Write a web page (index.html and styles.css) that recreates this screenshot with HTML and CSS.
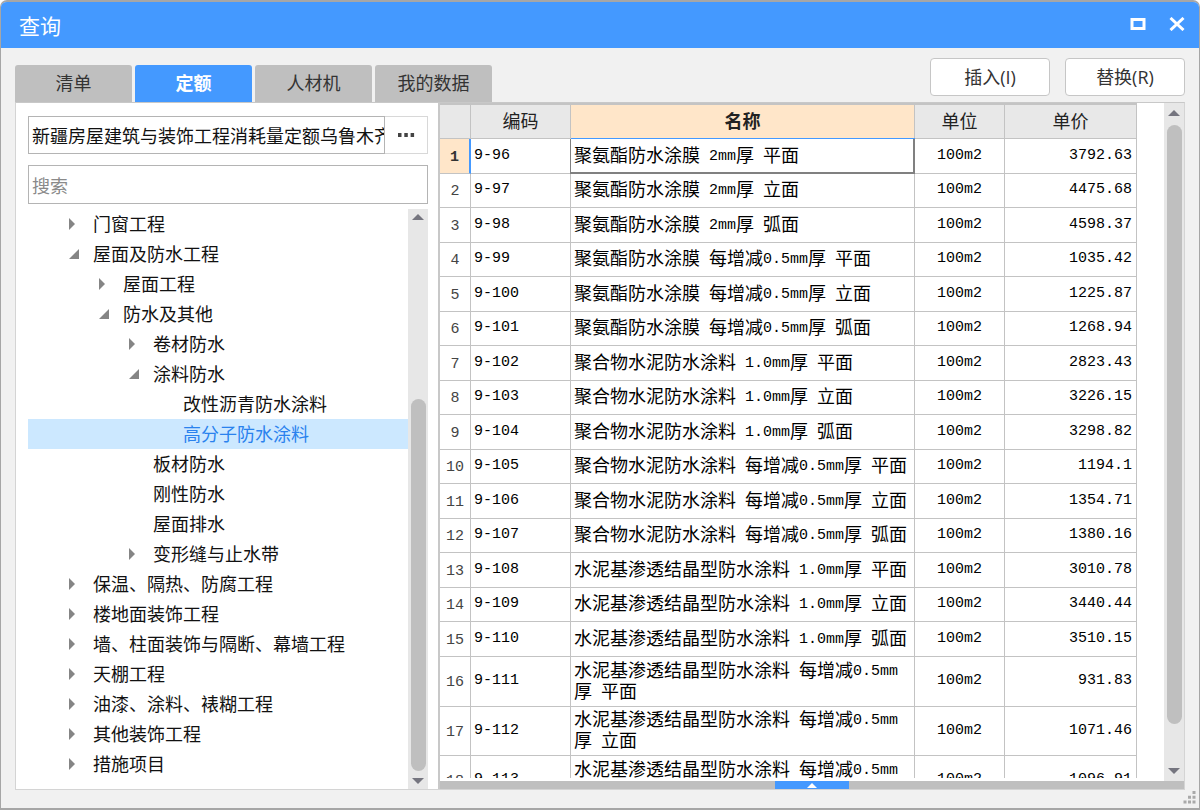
FILE: index.html
```html
<!DOCTYPE html>
<html lang="zh-CN">
<head>
<meta charset="utf-8">
<title>查询</title>
<link rel="stylesheet" href="styles.css">
</head>
<body>
<div class="window">
  <header class="titlebar">
    <h1 class="title">查询</h1>
    <button class="win-btn" aria-label="最大化"><svg width="16" height="14" viewBox="0 0 16 14"><path d="M2 2.500h12v9H2z" fill="none" stroke="#fff" stroke-width="3"/></svg></button>
    <button class="win-btn" aria-label="关闭"><svg width="16" height="14" viewBox="0 0 16 14"><path d="M1.500 1l13 12M14.500 1l-13 12" fill="none" stroke="#fff" stroke-width="3"/></svg></button>
  </header>

  <div class="toolbar">
    <nav class="tabs">
      <button class="tab">清单</button>
      <button class="tab active">定额</button>
      <button class="tab">人材机</button>
      <button class="tab">我的数据</button>
    </nav>
    <div class="actions">
      <button class="action">插入(I)</button>
      <button class="action">替换(R)</button>
    </div>
  </div>

  <main class="panel">
    <section class="side">
      <div class="picker">
        <input class="picker-input" type="text" aria-label="定额库" value="新疆房屋建筑与装饰工程消耗量定额乌鲁木齐">
        <button class="picker-btn" aria-label="选择定额库"><svg width="18" height="4" viewBox="0 0 18 4"><path d="M1 0h3.500v4H1zM7.300 0h3.500v4H7.300zM13.600 0h3.500v4h-3.500z" fill="#444"/></svg></button>
      </div>
      <input class="search" type="text" placeholder="搜索" aria-label="搜索">
      <div class="tree-wrap">
        <ul class="tree">
          <li class="node l1"><button class="toggle closed" aria-label="展开"></button>门窗工程</li>
          <li class="node l1"><button class="toggle open" aria-label="折叠"></button>屋面及防水工程</li>
          <li class="node l2"><button class="toggle closed" aria-label="展开"></button>屋面工程</li>
          <li class="node l2"><button class="toggle open" aria-label="折叠"></button>防水及其他</li>
          <li class="node l3"><button class="toggle closed" aria-label="展开"></button>卷材防水</li>
          <li class="node l3"><button class="toggle open" aria-label="折叠"></button>涂料防水</li>
          <li class="node l4 leaf">改性沥青防水涂料</li>
          <li class="node l4 leaf selected">高分子防水涂料</li>
          <li class="node l3 leaf">板材防水</li>
          <li class="node l3 leaf">刚性防水</li>
          <li class="node l3 leaf">屋面排水</li>
          <li class="node l3"><button class="toggle closed" aria-label="展开"></button>变形缝与止水带</li>
          <li class="node l1"><button class="toggle closed" aria-label="展开"></button>保温、隔热、防腐工程</li>
          <li class="node l1"><button class="toggle closed" aria-label="展开"></button>楼地面装饰工程</li>
          <li class="node l1"><button class="toggle closed" aria-label="展开"></button>墙、柱面装饰与隔断、幕墙工程</li>
          <li class="node l1"><button class="toggle closed" aria-label="展开"></button>天棚工程</li>
          <li class="node l1"><button class="toggle closed" aria-label="展开"></button>油漆、涂料、裱糊工程</li>
          <li class="node l1"><button class="toggle closed" aria-label="展开"></button>其他装饰工程</li>
          <li class="node l1"><button class="toggle closed" aria-label="展开"></button>措施项目</li>
        </ul>
        <div class="scrollbar">
          <span class="arrow up"></span>
          <div class="track tree-track"><div class="thumb"></div></div>
          <span class="arrow down"></span>
        </div>
      </div>
    </section>

    <section class="content">
      <div class="grid-wrap">
        <div class="grid-view">
          <table class="grid">
            <colgroup><col class="c-idx"><col class="c-code"><col><col class="c-unit"><col class="c-price"></colgroup>
            <thead>
              <tr><th></th><th>编码</th><th class="current">名称</th><th>单位</th><th>单价</th></tr>
            </thead>
            <tbody>
              <tr class="current-row"><td>1</td><td>9-96</td><td>聚氨酯防水涂膜<span class="n"> 2mm</span>厚<span class="n"> </span>平面</td><td>100m2</td><td>3792.63</td></tr>
              <tr><td>2</td><td>9-97</td><td>聚氨酯防水涂膜<span class="n"> 2mm</span>厚<span class="n"> </span>立面</td><td>100m2</td><td>4475.68</td></tr>
              <tr><td>3</td><td>9-98</td><td>聚氨酯防水涂膜<span class="n"> 2mm</span>厚<span class="n"> </span>弧面</td><td>100m2</td><td>4598.37</td></tr>
              <tr><td>4</td><td>9-99</td><td>聚氨酯防水涂膜<span class="n"> </span>每增减<span class="n">0.5mm</span>厚<span class="n"> </span>平面</td><td>100m2</td><td>1035.42</td></tr>
              <tr><td>5</td><td>9-100</td><td>聚氨酯防水涂膜<span class="n"> </span>每增减<span class="n">0.5mm</span>厚<span class="n"> </span>立面</td><td>100m2</td><td>1225.87</td></tr>
              <tr><td>6</td><td>9-101</td><td>聚氨酯防水涂膜<span class="n"> </span>每增减<span class="n">0.5mm</span>厚<span class="n"> </span>弧面</td><td>100m2</td><td>1268.94</td></tr>
              <tr><td>7</td><td>9-102</td><td>聚合物水泥防水涂料<span class="n"> 1.0mm</span>厚<span class="n"> </span>平面</td><td>100m2</td><td>2823.43</td></tr>
              <tr><td>8</td><td>9-103</td><td>聚合物水泥防水涂料<span class="n"> 1.0mm</span>厚<span class="n"> </span>立面</td><td>100m2</td><td>3226.15</td></tr>
              <tr><td>9</td><td>9-104</td><td>聚合物水泥防水涂料<span class="n"> 1.0mm</span>厚<span class="n"> </span>弧面</td><td>100m2</td><td>3298.82</td></tr>
              <tr><td>10</td><td>9-105</td><td>聚合物水泥防水涂料<span class="n"> </span>每增减<span class="n">0.5mm</span>厚<span class="n"> </span>平面</td><td>100m2</td><td>1194.1</td></tr>
              <tr><td>11</td><td>9-106</td><td>聚合物水泥防水涂料<span class="n"> </span>每增减<span class="n">0.5mm</span>厚<span class="n"> </span>立面</td><td>100m2</td><td>1354.71</td></tr>
              <tr><td>12</td><td>9-107</td><td>聚合物水泥防水涂料<span class="n"> </span>每增减<span class="n">0.5mm</span>厚<span class="n"> </span>弧面</td><td>100m2</td><td>1380.16</td></tr>
              <tr><td>13</td><td>9-108</td><td>水泥基渗透结晶型防水涂料<span class="n"> 1.0mm</span>厚<span class="n"> </span>平面</td><td>100m2</td><td>3010.78</td></tr>
              <tr><td>14</td><td>9-109</td><td>水泥基渗透结晶型防水涂料<span class="n"> 1.0mm</span>厚<span class="n"> </span>立面</td><td>100m2</td><td>3440.44</td></tr>
              <tr><td>15</td><td>9-110</td><td>水泥基渗透结晶型防水涂料<span class="n"> 1.0mm</span>厚<span class="n"> </span>弧面</td><td>100m2</td><td>3510.15</td></tr>
              <tr class="tall"><td>16</td><td>9-111</td><td>水泥基渗透结晶型防水涂料<span class="n"> </span>每增减<span class="n">0.5mm</span>厚<span class="n"> </span>平面</td><td>100m2</td><td>931.83</td></tr>
              <tr class="tall"><td>17</td><td>9-112</td><td>水泥基渗透结晶型防水涂料<span class="n"> </span>每增减<span class="n">0.5mm</span>厚<span class="n"> </span>立面</td><td>100m2</td><td>1071.46</td></tr>
              <tr class="tall"><td>18</td><td>9-113</td><td>水泥基渗透结晶型防水涂料<span class="n"> </span>每增减<span class="n">0.5mm</span>厚<span class="n"> </span>弧面</td><td>100m2</td><td>1096.91</td></tr>
            </tbody>
          </table>
        </div>
        <div class="scrollbar grid-scrollbar">
          <span class="arrow up"></span>
          <div class="track grid-track"><div class="thumb"></div></div>
          <span class="arrow down"></span>
        </div>
      </div>
      <div class="splitter"><button class="splitter-btn" aria-label="展开下方面板"><svg width="10" height="5" viewBox="0 0 10 5"><path d="M5 0l5 5H0z" fill="#fff"/></svg></button></div>
    </section>
  </main>

  <footer class="statusbar">
    <svg width="13" height="13" viewBox="0 0 13 13"><path d="M9.500 0h3v3h-3zM5 4.700h3v3H5zM9.500 4.700h3v3h-3zM.5 9.500h3v3h-3zM5 9.500h3v3H5zM9.500 9.500h3v3h-3z" fill="#a9a9a9"/></svg>
  </footer>
</div>
</body>
</html>
```

FILE: styles.css
```css
* {
  box-sizing: border-box;
}

body {
  margin: 0;
  background: #fff;
  color: #111;
  font: 18px/30px "Noto Sans CJK SC", sans-serif;
}

button,
input {
  margin: 0;
  padding: 0;
  border: 0;
  background: none;
  color: inherit;
  font: inherit;
}

.window {
  display: flex;
  flex-direction: column;
  height: 100vh;
  overflow: hidden;
  border: 1px solid #a6a6a6;
  border-width: 2px 1px;
  border-radius: 7px 7px 0 0;
  background: #f1f1f1;
}

/* Title bar */
.titlebar {
  display: flex;
  flex: none;
  align-items: center;
  gap: 23px;
  height: 46px;
  padding: 0 14px 2px 18px;
  background: #4499ff;
  color: #fff;
}

.title {
  flex: 1;
  margin: 0;
  padding-top: 2px;
  font-size: 21px;
  font-weight: 400;
}

.win-btn {
  display: flex;
}

/* Tabs and actions */
.toolbar {
  display: flex;
  flex: none;
  justify-content: space-between;
  align-items: flex-end;
  height: 54px;
  padding: 0 14px;
}

.tabs {
  display: flex;
  gap: 3px;
}

.tab {
  width: 117px;
  height: 37px;
  padding-bottom: 3px;
  border-radius: 3px 3px 0 0;
  background: #bfbfbf;
  color: #333;
}

.tab.active {
  background: #4499ff;
  color: #fff;
  font-weight: 700;
}

.actions {
  display: flex;
  gap: 15px;
  padding-bottom: 6px;
}

.action {
  width: 120px;
  height: 38px;
  border: 1px solid #c6c6c6;
  border-radius: 4px;
  background: #fff;
  color: #333;
  font-family: "Open Sans", "Noto Sans CJK SC", sans-serif;
}

/* Main panel */
.panel {
  display: flex;
  flex: 1;
  min-height: 0;
  margin: 0 14px;
  border: 1px solid #d4d4d4;
  border-top-color: #c8c8c8;
  background: #fff;
}

.side {
  display: flex;
  flex: none;
  flex-direction: column;
  width: 422px;
  padding: 13px 10px 0 12px;
}

.picker {
  display: flex;
  flex: none;
  height: 38px;
}

.picker-input {
  flex: 1;
  min-width: 0;
  padding-left: 3px;
  border: 1px solid #b4b4b4;
}

.picker-btn {
  display: flex;
  align-items: center;
  justify-content: center;
  width: 43px;
  border: 1px solid #d8d8d8;
  border-left: 0;
}

.search {
  flex: none;
  height: 39px;
  margin-top: 11px;
  padding-left: 3px;
  border: 1px solid #b4b4b4;
}

.search::placeholder {
  color: #8a8a8a;
  opacity: 1;
}

/* Tree */
.tree-wrap {
  display: flex;
  flex: 1;
  min-height: 0;
  margin-top: 5px;
}

.tree {
  flex: 1;
  margin: 0;
  padding: 0;
  overflow: hidden;
  list-style: none;
}

.node {
  display: flex;
  height: 30px;
  line-height: 28px;
  white-space: nowrap;
}

.l1 { padding-left: 41px; }
.l2 { padding-left: 71px; }
.l3 { padding-left: 101px; }
.l4 { padding-left: 131px; }

.leaf::before {
  content: "";
  width: 24px;
}

.selected {
  background: #cce8ff;
  color: #2a82ee;
}

.toggle {
  display: flex;
  align-items: center;
  width: 24px;
}

.toggle::before {
  content: "";
  background: #858585;
}

.closed::before {
  width: 6px;
  height: 12px;
  clip-path: polygon(0 0, 100% 50%, 0 100%);
}

.open::before {
  width: 10px;
  height: 10px;
  clip-path: polygon(100% 0, 100% 100%, 0 100%);
}

/* Scrollbars */
.scrollbar {
  display: flex;
  flex: none;
  flex-direction: column;
  align-items: center;
  width: 20px;
  padding: 5px 0;
  background: #e7e7e7;
}

.grid-scrollbar {
  padding: 7px 0;
}

.arrow {
  width: 12px;
  height: 6px;
  background: #75757f;
}

.up {
  clip-path: polygon(50% 0, 100% 100%, 0 100%);
}

.down {
  clip-path: polygon(0 0, 100% 0, 50% 100%);
}

.track {
  display: flex;
  flex: 1;
  flex-direction: column;
  width: 15px;
}

.thumb {
  flex: 1;
  border-radius: 8px;
  background: #bfbfbf;
}

.tree-track {
  padding: 179px 0 7px;
}

.grid-track {
  padding: 9px 0 44px;
}

/* Data grid */
.content {
  display: flex;
  flex: 1;
  flex-direction: column;
  min-width: 0;
  border-left: 2px solid #c8c8c8;
}

.grid-wrap {
  display: flex;
  flex: 1;
  min-height: 0;
}

.grid-view {
  flex: 1;
  min-width: 0;
  margin-bottom: 3px;
  padding-right: 27px;
  overflow: hidden;
}

.grid {
  width: 100%;
  border-top: 2px solid #c4c4c4;
  border-spacing: 0;
  table-layout: fixed;
  color: #000;
  line-height: 21px;
}

.c-idx { width: 31px; }
.c-code { width: 100px; }
.c-unit { width: 90px; }
.c-price { width: 132px; }

.grid th,
.grid td {
  padding: 0 3px 2px;
  border: 1px solid #c3c3c3;
  border-width: 0 1px 1px 0;
}

.grid th {
  height: 34px;
  background: #e8e8e8;
  color: #222;
  font-weight: 400;
}

.grid th.current {
  background: #ffe6c9;
  font-weight: 700;
}

.grid td {
  height: 34px;
  font-family: "Liberation Mono", "Noto Sans CJK SC", monospace;
  font-size: 15px;
}

.grid tr:nth-child(odd) td {
  height: 35px;
}

.grid tr.tall:nth-child(even) td {
  height: 50px;
}

.grid tr.tall:nth-child(odd) td {
  height: 49px;
}

.grid td:nth-child(1) {
  padding: 2px 0 0;
  color: #444;
  text-align: center;
}

.grid td:nth-child(3) {
  padding: 0 2px 4px 3px;
  font-family: "Noto Sans CJK SC", sans-serif;
  font-size: 18px;
}

.grid td:nth-child(4) {
  text-align: center;
}

.grid td:nth-child(5) {
  padding-right: 4px;
  text-align: right;
}

.n {
  font-family: "Liberation Mono", monospace;
  font-size: 15px;
  line-height: 1;
  vertical-align: 2px;
}

.grid .current-row td:nth-child(1) {
  border-right: 2px solid #4499ff;
  background: #ffe6c9;
  color: #333;
  font-weight: 700;
}

.grid .current-row td:nth-child(3) {
  border-color: #808080;
  box-shadow: -1px 0 #808080, inset -1px -1px #808080, 0 -1px #4499ff;
}

.splitter {
  display: flex;
  flex: none;
  justify-content: center;
  height: 8px;
  background: #bfbfbf;
}

.splitter-btn {
  display: flex;
  align-items: center;
  justify-content: center;
  width: 74px;
  background: #4499ff;
}

.statusbar {
  display: flex;
  flex: none;
  justify-content: flex-end;
  height: 18px;
  padding: 1px 3px 0;
}
```
